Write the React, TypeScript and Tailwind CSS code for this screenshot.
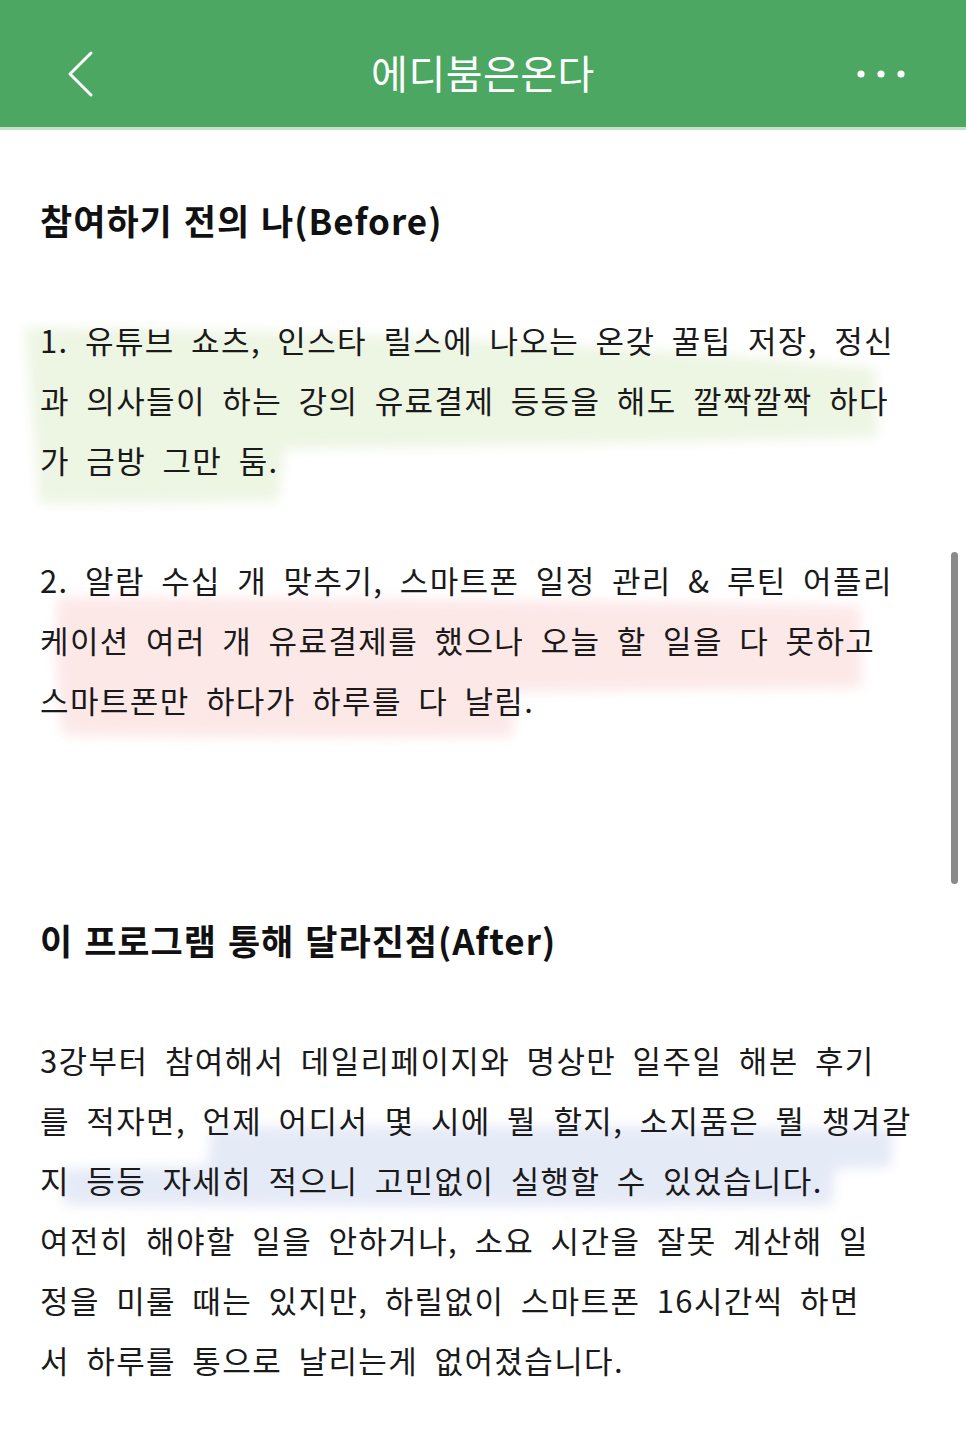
import type { ReactNode } from 'react'

const para1 = [
  '1. 유튜브 쇼츠, 인스타 릴스에 나오는 온갖 꿀팁 저장, 정신',
  '과 의사들이 하는 강의 유료결제 등등을 해도 깔짝깔짝 하다',
  '가 금방 그만 둠.',
]

const para2 = [
  '2. 알람 수십 개 맞추기, 스마트폰 일정 관리 & 루틴 어플리',
  '케이션 여러 개 유료결제를 했으나 오늘 할 일을 다 못하고',
  '스마트폰만 하다가 하루를 다 날림.',
]

const para3 = [
  '3강부터 참여해서 데일리페이지와 명상만 일주일 해본 후기',
  '를 적자면, 언제 어디서 몇 시에 뭘 할지, 소지품은 뭘 챙겨갈',
  '지 등등 자세히 적으니 고민없이 실행할 수 있었습니다.',
  '여전히 해야할 일을 안하거나, 소요 시간을 잘못 계산해 일',
  '정을 미룰 때는 있지만, 하릴없이 스마트폰 16시간씩 하면',
  '서 하루를 통으로 날리는게 없어졌습니다.',
]

function Spacer({ lines = 1 }: { lines?: number }) {
  return <div style={{ height: lines * 60 }} />
}

function Heading({ children }: { children: ReactNode }) {
  return (
    <div className="h-[60px] px-[40px] flex items-center text-[35px] font-bold tracking-[1px] text-[#111] whitespace-nowrap [word-spacing:2px]">
      {children}
    </div>
  )
}

// brush stroke highlight sitting behind a paragraph
function Marker({ d, color, id }: { d: string; color: string; id: string }) {
  return (
    <svg
      className="absolute left-0 top-0 w-[966px] h-[180px] overflow-visible pointer-events-none"
      viewBox="0 0 966 180"
    >
      <defs>
        <filter id={id} x="-10%" y="-40%" width="120%" height="180%">
          <feGaussianBlur stdDeviation="6" />
        </filter>
      </defs>
      <path d={d} fill={color} filter={`url(#${id})`} />
    </svg>
  )
}

function Paragraph({ lines, marker }: { lines: string[]; marker?: ReactNode }) {
  return (
    <div className="relative">
      {marker}
      <div className="relative px-[40px]">
        {lines.map((l) => (
          <div
            key={l}
            className="h-[60px] flex items-center text-[31px] tracking-[1.4px] text-[#1a1a1a] whitespace-nowrap [word-spacing:8px]"
          >
            {l}
          </div>
        ))}
      </div>
    </div>
  )
}

export default function App() {
  return (
    <div className="relative w-[966px] h-[1434px] overflow-hidden bg-white font-['Noto_Sans_CJK_KR',sans-serif]">
      <header className="h-[130px] bg-[#4ca762] border-b-[3px] border-[#c4e3cb] grid grid-cols-[1fr_auto_1fr] items-center pt-[16px] px-[60px] text-white">
        <svg width="34" height="50" viewBox="0 0 34 50" className="ml-[2px] mt-[4px]">
          <path d="M29 4 L8 25 L29 46" fill="none" stroke="white" strokeWidth="3" strokeLinecap="round" strokeLinejoin="round" />
        </svg>
        <div className="text-[40px] font-normal tracking-[0.5px]">에디붐은온다</div>
        <svg width="50" height="10" viewBox="0 0 50 10" className="justify-self-end mt-[4px]">
          <circle cx="5" cy="5" r="3.6" fill="white" />
          <circle cx="25" cy="5" r="3.6" fill="white" />
          <circle cx="45" cy="5" r="3.6" fill="white" />
        </svg>
      </header>

      <Spacer lines={1} />
      <Heading>참여하기 전의 나(Before)</Heading>
      <Spacer />
      <Paragraph
        lines={para1}
        marker={
          <Marker
            id="mk-green"
            color="#edf5e3"
            d="M25 18 Q450 20 875 58 L878 127 Q580 135 285 139 L278 190 Q160 194 40 193 L30 77 Z"
          />
        }
      />
      <Spacer />
      <Paragraph
        lines={para2}
        marker={
          <Marker
            id="mk-pink"
            color="#fde8e8"
            d="M58 47 Q460 48 860 56 L862 137 Q690 140 515 142 L512 187 Q290 189 62 185 L55 97 Z"
          />
        }
      />
      <Spacer lines={3} />
      <Heading>이 프로그램 통해 달라진점(After)</Heading>
      <Spacer />
      <Paragraph
        lines={para3}
        marker={
          <Marker
            id="mk-blue"
            color="#e5eaf7"
            d="M212 97 Q550 95 893 99 L891 137 L835 139 L832 175 Q450 178 64 175 L62 139 L207 136 Z"
          />
        }
      />

      <div className="absolute right-[8px] top-[552px] w-[7px] h-[332px] rounded-full bg-[#8a8a8a]" />
    </div>
  )
}
